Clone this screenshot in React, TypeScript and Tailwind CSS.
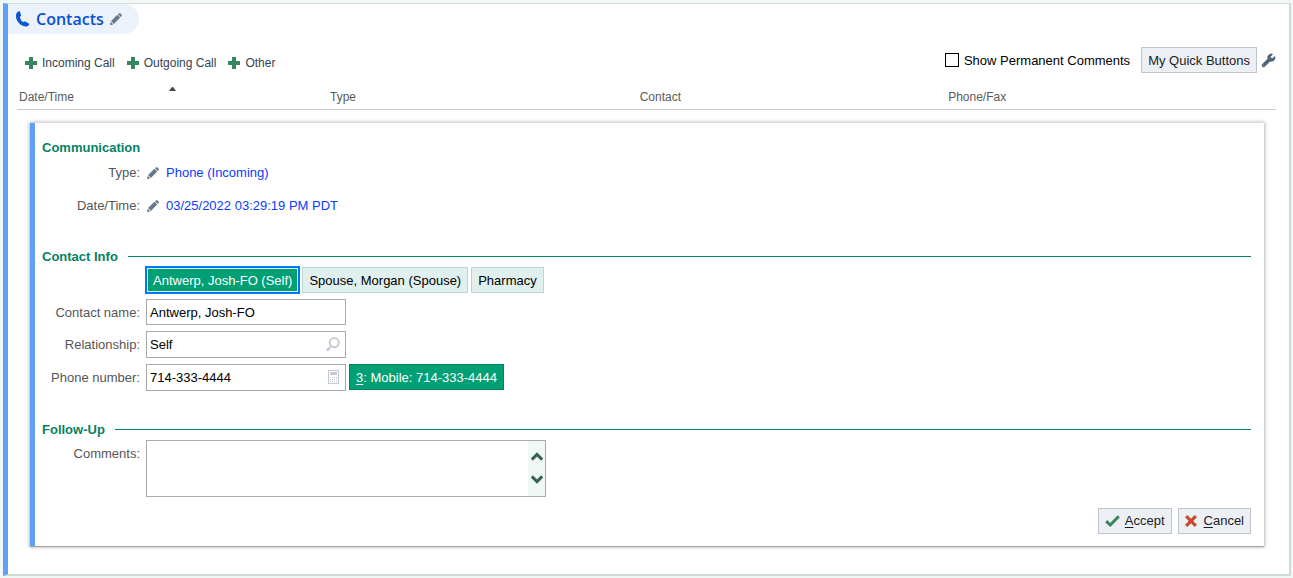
import { useState } from "react";
import type { ReactNode } from "react";
import { FaWrench } from "react-icons/fa";

function PhoneIcon() {
  return (
    <svg viewBox="0 0 14 16" className="h-4 w-3.5 fill-[#0a56d6]" aria-hidden="true">
      <path d="M2.2 0.4 C3 0 3.6 0.1 3.9 0.6 L5 4 C5.2 4.6 5 5 4.4 5.4 L3.9 5.9 C4.2 8 5.4 9.9 7.2 11.1 L8.3 10.6 C8.8 10.3 9.3 10.3 9.7 10.7 L12.8 12.6 C13.4 13 13.4 13.5 12.9 14 C11.7 15.6 9.6 16 7.4 15.1 C3 13.3 0 9.6 0 5 C0 2.9 0.8 1.2 2.2 0.4 Z" />
    </svg>
  );
}

function PencilIcon() {
  return (
    <svg viewBox="0 0 12 12" className="size-3 shrink-0 fill-[#66788a]" aria-hidden="true">
      <path d="M0 12 L0.6 8.7 L3.3 11.4 Z" />
      <path d="M1.1 8.1 L7.4 1.8 L10.2 4.6 L3.9 10.9 Z" />
      <path d="M8 1.2 L8.8 0.5 C9.3 0 10 0 10.5 0.5 L11.5 1.5 C12 2 12 2.7 11.5 3.2 L10.8 4 Z" />
    </svg>
  );
}

function PlusIcon() {
  return (
    <svg viewBox="0 0 12 12" className="size-3 fill-[#388560]" aria-hidden="true">
      <path d="M4 0h4v4h4v4H8v4H4V8H0V4h4z" />
    </svg>
  );
}

function SearchIcon() {
  return (
    <svg viewBox="0 0 14 15" className="h-[15px] w-3.5" fill="none" stroke="#c5cad2" aria-hidden="true">
      <circle cx="8.3" cy="5.6" r="4.6" strokeWidth="1.9" />
      <path d="M5 9.5 L3.6 10.9" strokeWidth="1.4" />
      <path d="M3.8 10.8 L0.9 13.6" strokeWidth="2.8" />
    </svg>
  );
}

function KeypadIcon() {
  return (
    <svg viewBox="0 0 11 14" className="h-3.5 w-[11px]" aria-hidden="true">
      <rect x="0.5" y="0.5" width="10" height="13" fill="#fff" stroke="#c5cad2" />
      <rect x="2" y="2" width="7" height="3" fill="#c5cad2" />
      <path d="M2 7.5h7M2 9.5h7M2 11.5h7" stroke="#c5cad2" strokeDasharray="1 1" />
    </svg>
  );
}

function CheckIcon() {
  return (
    <svg viewBox="0 0 15 12" className="h-3 w-[15px]" fill="none" stroke="#388560" strokeWidth="3" aria-hidden="true">
      <path d="M1.2 6.2 L5.2 10 L13.8 1.2" />
    </svg>
  );
}

function CrossIcon() {
  return (
    <svg viewBox="0 0 12 12" className="size-3" fill="none" stroke="#c8492c" strokeWidth="3.2" aria-hidden="true">
      <path d="M1.2 1.2 L10.8 10.8 M10.8 1.2 L1.2 10.8" />
    </svg>
  );
}

function Chevron({ d }: { d: string }) {
  return (
    <svg viewBox="0 0 12 9" className="h-[9px] w-3" fill="none" stroke="#3d5f58" strokeWidth="3" aria-hidden="true">
      <path d={d} />
    </svg>
  );
}

function AddButton({ children }: { children: ReactNode }) {
  return (
    <button type="button" className="flex items-center gap-[5px] text-xs leading-5 text-[#33434f]">
      <PlusIcon />
      {children}
    </button>
  );
}

function SectionTitle({ children, line = true }: { children: ReactNode; line?: boolean }) {
  return (
    <div className="flex h-5 items-center gap-2.5">
      <h2 className="font-bold text-[#058262]">{children}</h2>
      {line && <span className="h-px flex-1 bg-[#058262]" />}
    </div>
  );
}

const labelClass = "w-[98px] shrink-0 text-right text-[#555]";
const inputClass = "w-full border border-[#a9a9a9] bg-white pl-[3px] text-black outline-none";
const grayButton =
  "flex h-[26px] items-center border border-[#bfc5ca] bg-[#ecf0f4] px-1.5 text-[#1c1c24]";

const people = ["Antwerp, Josh-FO (Self)", "Spouse, Morgan (Spouse)", "Pharmacy"];

export default function App() {
  const [selected, setSelected] = useState(0);

  return (
    <div className="bg-[#f1f7f5] pt-[3px] pr-0.5 pb-0.5 pl-[3px] font-['Liberation_Sans',Arial,sans-serif] text-[13px] leading-5">
      <main className="border-t border-r-2 border-b-2 border-l-5 border-t-[#d3dedb] border-r-[#cfdad6] border-b-[#cfdad6] border-l-[#609ff8] bg-white pb-7">
        <header className="flex">
          <div className="flex h-[30px] items-center rounded-r-full bg-[#ebf2fb] pr-[17px] pl-2">
            <PhoneIcon />
            <h1 className="ml-1.5 font-['Open_Sans','Noto_Sans',sans-serif] text-base font-semibold text-[#0a50cf]">
              Contacts
            </h1>
            <button type="button" aria-label="Edit title" className="ml-1.5">
              <PencilIcon />
            </button>
          </div>
        </header>

        <div className="mt-[13px] flex items-center justify-between pr-3.5 pl-[17px]">
          <div className="flex items-center gap-3 pt-1.5">
            <AddButton>Incoming Call</AddButton>
            <AddButton>Outgoing Call</AddButton>
            <AddButton>Other</AddButton>
          </div>
          <div className="flex items-center text-black">
            <label className="flex items-center gap-[5px]">
              <input type="checkbox" className="size-3.5 appearance-none border border-black bg-white checked:bg-[#009f74]" />
              <span className="pt-0.5">Show Permanent Comments</span>
            </label>
            <button type="button" className={`${grayButton} ml-[11px] pt-0.5`}>
              My Quick Buttons
            </button>
            <button type="button" aria-label="Configure buttons" className="ml-[5px]">
              <FaWrench className="size-[13px] overflow-visible stroke-[#4d6177] stroke-[28] text-[#4d6177]" />
            </button>
          </div>
        </div>

        <div className="mt-2.5 pr-[13px] pl-[9px]">
          <table className="w-full table-fixed border-b border-[#ccc] text-left text-xs text-[#5a5a5a]">
            <thead>
              <tr className="h-[26px]">
                <th className="w-[24.7%] pt-0.5 pl-0.5 font-normal">
                  <div className="flex items-center">
                    <span className="w-1/2">Date/Time</span>
                    <svg viewBox="0 0 7 4" className="mb-4 -ml-1 h-1 w-[7px] fill-[#444]" aria-hidden="true">
                      <path d="M0 4 L3 0 L4 0 L7 4 Z" />
                    </svg>
                  </div>
                </th>
                <th className="w-[24.6%] pt-0.5 pl-0.5 font-normal">Type</th>
                <th className="w-[24.5%] pt-0.5 pl-0.5 font-normal">Contact</th>
                <th className="pt-0.5 pl-0.5 font-normal">Phone/Fax</th>
              </tr>
            </thead>
          </table>
        </div>

        <form
          onSubmit={(e) => e.preventDefault()}
          className="mt-[13px] mr-[25px] ml-[22px] border-l-5 border-[#609ff8] bg-white pt-[15px] pr-[13px] pb-3 pl-[7px] shadow-[0_0_4px_1px_rgba(0,0,0,0.25),0_1px_1px_rgba(0,0,0,0.25)]"
        >
          <SectionTitle line={false}>Communication</SectionTitle>
          <div className="mt-[5px] flex h-5 items-center">
            <span className={labelClass}>Type:</span>
            <a href="#type" className="ml-[7px] flex items-center gap-[7px] text-[#0b3cff]">
              <PencilIcon />
              Phone (Incoming)
            </a>
          </div>
          <div className="mt-[13px] flex h-5 items-center">
            <span className={labelClass}>Date/Time:</span>
            <a href="#date" className="ml-[7px] flex items-center gap-[7px] text-[#0b3cff]">
              <PencilIcon />
              03/25/2022 03:29:19 PM PDT
            </a>
          </div>

          <div className="mt-[31px]">
            <SectionTitle>Contact Info</SectionTitle>
          </div>
          <div className="flex gap-[3px] pl-[104px]">
            {people.map((name, i) => (
              <button
                key={name}
                type="button"
                onClick={() => setSelected(i)}
                className={
                  i === selected
                    ? "h-[26px] border border-[#0078f8] bg-[#009f74] px-1.5 pt-0.5 text-white inset-ring inset-ring-[#d5eee8] outline outline-[#0078f8]"
                    : "h-[26px] border border-[#bcd5d8] bg-[#dff0ee] px-1.5 pt-0.5 text-black"
                }
              >
                {name}
              </button>
            ))}
          </div>
          <div className="mt-1.5 flex items-center gap-1.5">
            <label htmlFor="name" className={`${labelClass} pt-0.5`}>Contact name:</label>
            <div className="w-[200px]">
              <input id="name" defaultValue="Antwerp, Josh-FO" className={`${inputClass} h-[26px] pt-0.5`} />
            </div>
          </div>
          <div className="mt-1.5 flex items-center gap-1.5">
            <label htmlFor="relationship" className={`${labelClass} pt-0.5`}>Relationship:</label>
            <div className="relative w-[200px]">
              <input id="relationship" defaultValue="Self" className={`${inputClass} h-[27px]`} />
              <span className="absolute inset-y-0 right-1.5 flex items-center">
                <SearchIcon />
              </span>
            </div>
          </div>
          <div className="mt-1.5 flex items-center gap-1.5">
            <label htmlFor="phone" className={`${labelClass} pt-0.5`}>Phone number:</label>
            <div className="flex gap-[3px]">
              <div className="relative w-[200px]">
                <input id="phone" defaultValue="714-333-4444" className={`${inputClass} h-[27px]`} />
                <span className="absolute inset-y-0 right-[7px] flex items-center">
                  <KeypadIcon />
                </span>
              </div>
              <button type="button" className="h-[26px] border border-[#04835f] bg-[#009f74] px-1.5 pt-0.5 text-white">
                <span className="underline underline-offset-2">3</span>: Mobile: 714-333-4444
              </button>
            </div>
          </div>

          <div className="mt-[29px]">
            <SectionTitle>Follow-Up</SectionTitle>
          </div>
          <div className="flex items-start gap-1.5">
            <label htmlFor="comments" className={`${labelClass} pt-1`}>Comments:</label>
            <div className="flex h-[57px] w-[400px] border border-[#a9a9a9] bg-white">
              <textarea id="comments" className="flex-1 resize-none px-[3px] text-black outline-none" />
              <div className="flex w-[17px] flex-col items-center justify-center gap-3.5 bg-[#eff8f5]">
                <button type="button" aria-label="Scroll up" className="block">
                  <Chevron d="M0.8 7.6 L6 2.4 L11.2 7.6" />
                </button>
                <button type="button" aria-label="Scroll down" className="block">
                  <Chevron d="M0.8 1.4 L6 6.6 L11.2 1.4" />
                </button>
              </div>
            </div>
          </div>

          <div className="mt-[11px] flex justify-end gap-1.5">
            <button type="submit" className={`${grayButton} gap-[5px]`}>
              <CheckIcon />
              <span><span className="underline underline-offset-2">A</span>ccept</span>
            </button>
            <button type="button" className={`${grayButton} gap-[7px]`}>
              <CrossIcon />
              <span><span className="underline underline-offset-2">C</span>ancel</span>
            </button>
          </div>
        </form>
      </main>
    </div>
  );
}
